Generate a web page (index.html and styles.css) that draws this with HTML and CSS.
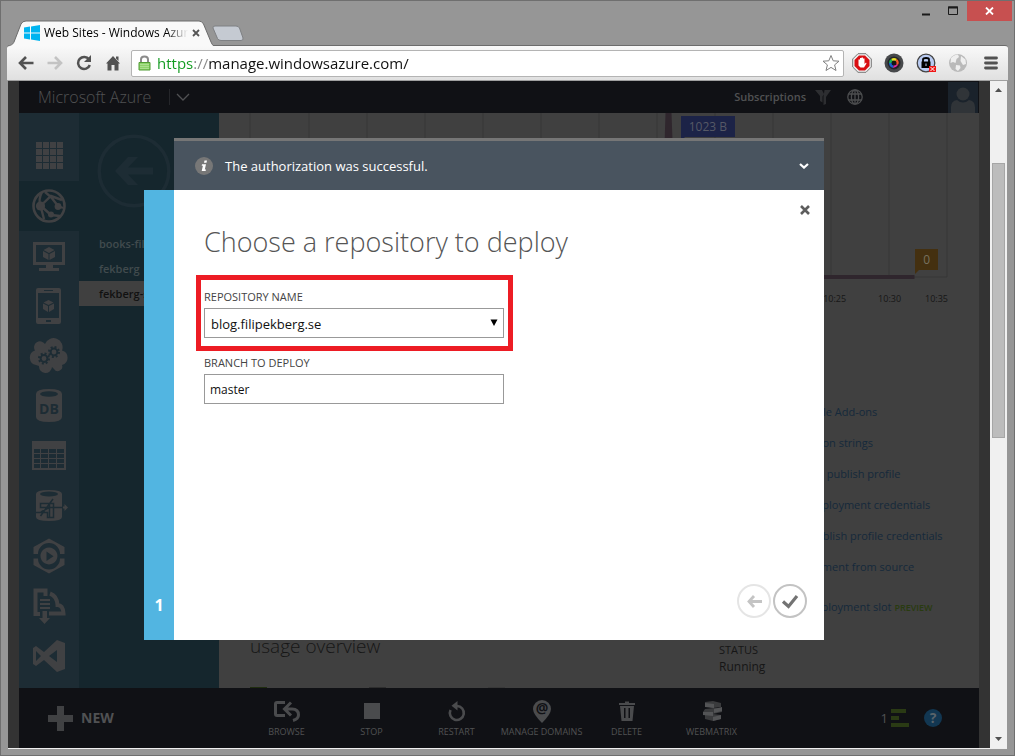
FILE: index.html
```html
<!DOCTYPE html>
<html lang="en">
<head>
<meta charset="utf-8">
<title>Web Sites - Windows Azure</title>
<link rel="stylesheet" href="styles.css">
</head>
<body>
<div class="window">
  <div class="titlebar">
    <div class="tab">
      <svg class="tab-shape" width="206" height="26" viewBox="0 0 206 26" aria-hidden="true"><path d="M0 26C4 25 5 24 6 22L13 4Q14.500 1 18 1H191Q194 1 195.500 4L203 22Q204 25 206 26" fill="#f9f9f9" stroke="#6c6c6c"/></svg>
      <svg width="16" height="16" viewBox="0 0 16 16" aria-hidden="true"><path fill="#00b4f0" d="M0 2.500L6 1.600V7.500H0zM7 1.400L16 0V7.500H7zM0 8.500H6V14.400L0 13.500zM7 8.500H16V16L7 14.600z"/></svg>
      <span class="tab-title">Web Sites - Windows Azur</span>
      <button class="plain" aria-label="Close tab"><svg width="8" height="8" viewBox="0 0 8 8"><path d="M1 1L7 7M7 1L1 7" stroke="#555" stroke-width="1.800"/></svg></button>
    </div>
    <button class="plain new-tab" aria-label="New tab"><svg width="32" height="17" viewBox="0 0 32 17"><path d="M3 1H24Q26.500 1 27.500 3L31 13Q31.500 15.500 29 15.500H9Q6.500 15.500 5.500 13.500L1 3Q.5 1 3 1z" fill="#c5cad2" stroke="#7e8083"/></svg></button>
    <div class="window-controls">
      <button class="plain" aria-label="Minimize"><svg width="10" height="10" viewBox="0 0 10 10"><path d="M1 8.500H9" stroke="#1b1b1b" stroke-width="2"/></svg></button>
      <button class="plain" aria-label="Maximize"><svg width="10" height="10" viewBox="0 0 10 10"><path d="M.5 1H9.500V8.500H.5z" fill="none" stroke="#1b1b1b"/><path d="M0 1.500H10" stroke="#1b1b1b" stroke-width="2"/></svg></button>
      <button class="plain close-window" aria-label="Close window"><svg width="9" height="8" viewBox="0 0 9 8"><path d="M1 .5L8 7.500M8 .5L1 7.500" stroke="#fff" stroke-width="1.800"/></svg></button>
    </div>
  </div>

  <div class="toolbar">
    <div class="nav-buttons">
      <button class="plain" aria-label="Back"><svg width="16" height="16" viewBox="0 0 16 16"><path d="M8 2L2 8L8 14M2.500 8H15.500" fill="none" stroke="#525252" stroke-width="2.600"/></svg></button>
      <button class="plain" aria-label="Forward" disabled><svg width="16" height="16" viewBox="0 0 16 16"><path d="M8 2L14 8L8 14M13.500 8H.5" fill="none" stroke="#c3c3c3" stroke-width="2.600"/></svg></button>
      <button class="plain" aria-label="Reload"><svg width="16" height="16" viewBox="0 0 16 16"><path d="M13 4.500A6 6 0 1 0 13.800 10" fill="none" stroke="#525252" stroke-width="2.500"/><path d="M15 0V7H8z" fill="#525252"/></svg></button>
      <button class="plain" aria-label="Home"><svg width="16" height="16" viewBox="0 0 16 16"><path d="M8 1L15 8.500H13.500V15.500H9.500V10H6.500V15.500H2.500V8.500H1zM11 1.500H13.500V6L11 3.500z" fill="#525252"/></svg></button>
    </div>
    <div class="omnibox">
      <svg width="13" height="16" viewBox="0 0 13 16" aria-hidden="true"><path d="M3 8V4.500Q3 1.500 6.500 1.500T10 4.500V8" fill="none" stroke="#8b8b8b" stroke-width="2"/><path d="M1 7.500H12V15H1z" fill="#8ed36a" stroke="#519c34"/><path d="M2 9.500H11M2 11.500H11M2 13.500H11" stroke="#acdf91"/></svg>
      <input class="url" type="text" aria-label="Address" value="https://manage.windowsazure.com/">
      <button class="plain" aria-label="Bookmark this page"><svg width="18" height="18" viewBox="0 0 18 18"><path d="M9 1.500L11.200 6.800L17 7.200L12.600 10.900L14 16.500L9 13.400L4 16.500L5.400 10.900L1 7.200L6.800 6.800z" fill="#fff" stroke="#808080"/></svg></button>
    </div>
    <div class="extensions">
      <button class="plain" aria-label="Ad blocker"><svg width="20" height="20" viewBox="0 0 20 20"><path d="M6 .7H14L19.300 6V14L14 19.300H6L.7 14V6z" fill="#eee" stroke="#777"/><path d="M7 2.500H13L17.500 7V13L13 17.500H7L2.500 13V7z" fill="#d90e12"/><path d="M6.500 10V6.500H8V9V5H9.500V9V4.500H11V9V5.500H12.500V11L14 9.500L14.500 10.500L12 14.500H8.500L6.500 12.500z" fill="#fff"/></svg></button>
      <button class="plain" aria-label="Camera"><svg width="20" height="20" viewBox="0 0 20 20"><circle cx="10" cy="10" r="9.500" fill="#47494b"/><circle cx="10" cy="10" r="6.500" fill="#24252a"/><circle cx="10" cy="10" r="5" fill="#111"/><path d="M10 10L7 6Q10 4 13 6z" fill="#e9e128"/><path d="M10 10L13 6Q16 9 14 12z" fill="#f05a28"/><path d="M10 10L14 12Q12 15 9 15z" fill="#dc2aa0"/><path d="M10 10L9 15Q5 14 5 10z" fill="#1a5fd0"/><path d="M10 10L5 10Q5 7 7 6z" fill="#18b35a"/><circle cx="10" cy="10" r="2.500" fill="#151515"/></svg></button>
      <button class="plain" aria-label="Password manager"><svg width="20" height="20" viewBox="0 0 20 20"><circle cx="10" cy="10" r="8.800" fill="#b9cbf2" stroke="#444" stroke-width="1.300"/><path d="M7 9V6.500Q7 5 10 5T13 6.500V9" fill="none" stroke="#000" stroke-width="1.800"/><path d="M5.500 8.500H14.500V15H5.500z" fill="#000"/><path d="M10 10.500V13" stroke="#b9cbf2"/><path d="M13 13H20V19H13z" fill="#f01515"/><path d="M14.500 14L18.500 18M18.500 14L14.500 18" stroke="#fff"/></svg></button>
      <button class="plain" aria-label="Globe"><svg width="20" height="20" viewBox="0 0 20 20"><circle cx="10" cy="10" r="9" fill="#bababa"/><path d="M3 5Q6 1.500 10 1.500L11 4L8.500 6L7.500 10L5 9L2.500 10zM13 3L17.500 6.500L18 11L15 12L12.500 8zM8 12L12 12.500L12.500 15L10 18L7.500 16z" fill="#efefef"/></svg></button>
      <button class="plain menu" aria-label="Menu"><svg width="14" height="14" viewBox="0 0 14 14"><path d="M1.500 2H12.500M1.500 7H12.500M1.500 12H12.500" stroke="#525252" stroke-width="2.800" stroke-linecap="round"/></svg></button>
    </div>
  </div>

  <div class="viewport">
    <div class="page">
      <header class="topbar">
        <span class="brand">Microsoft Azure</span>
        <button class="plain brand-menu" aria-label="Portals"><svg width="14" height="8" viewBox="0 0 14 8"><path d="M1 1L7 7L13 1" fill="none" stroke="#505153" stroke-width="1.300"/></svg></button>
        <a class="subscriptions" href="#">Subscriptions</a>
        <svg width="16" height="15" viewBox="0 0 16 15" aria-hidden="true"><path d="M0 0H7L9 4L7.500 6.500V12.500L5 11V6zM9.500 0H16L11 7V14L8.500 15V6.500z" fill="#2d2e31"/></svg>
        <button class="plain language" aria-label="Language"><svg width="16" height="16" viewBox="0 0 16 16"><g fill="none" stroke="#4c4d4f" stroke-width="1.300"><circle cx="8" cy="8" r="7.200"/><ellipse cx="8" cy="8" rx="3.600" ry="7.200"/><path d="M8 1V15M1.500 5H14.500M1.500 11H14.500"/></g></svg></button>
        <button class="plain avatar" aria-label="Account"><svg width="30" height="31" viewBox="0 0 30 31"><path fill="#1a222b" d="M0 0H30V31H0z"/><circle cx="15" cy="12" r="6.500" fill="#303438"/><path d="M3 31V25Q3 19 9 18Q15 23 21 18Q27 19 27 25V31z" fill="#303438"/></svg></button>
      </header>

      <div class="workspace">
        <nav class="services" aria-label="Services">
          <a href="#" aria-label="All items"><svg width="36" height="36" viewBox="0 0 36 36"><path d="M5 4h6v6H5zM12 4h6v6h-6zM19 4h6v6h-6zM26 4h6v6h-6zM5 11h6v6H5zM12 11h6v6h-6zM19 11h6v6h-6zM26 11h6v6h-6zM5 18h6v6H5zM12 18h6v6h-6zM19 18h6v6h-6zM26 18h6v6h-6zM5 25h6v6H5zM12 25h6v6h-6zM19 25h6v6h-6zM26 25h6v6h-6z"/></svg></a>
          <a class="current" href="#" aria-label="Web sites"><svg width="36" height="36" viewBox="0 0 36 36"><circle cx="18" cy="18" r="15.500" fill="none" stroke="#404143" stroke-width="2.600"/><path d="M11 4Q7 12 9.500 18L13 31M9.500 18L20 8L31 12M14 4L20 9L27 18L32 20M10 18L20 27L29 28" fill="none" stroke="#404143" stroke-width="2.400"/><circle cx="9.500" cy="18" r="4.600"/><circle cx="27" cy="18.500" r="3.400"/><circle cx="20" cy="26.500" r="3"/></svg></a>
          <a href="#" aria-label="Virtual machines"><svg width="36" height="36" viewBox="0 0 36 36"><path d="M2 4H34V27H22V30H28V33H8V30H15V27H2zM5 7V24H31V7z" fill-rule="evenodd"/><path d="M18 9L23.500 12L18 15L12.500 12zM12 13L17.500 16V22L12 19zM24 13L18.500 16V22L24 19z"/></svg></a>
          <a href="#" aria-label="Mobile services"><svg width="36" height="38" viewBox="0 0 36 38"><path d="M7 1H28Q30 1 30 3V35Q30 37 28 37H7Q5 37 5 35V3Q5 1 7 1zM7 6V31H28V6zM13 3V4H22V3zM15 33V35H20V33z" fill-rule="evenodd"/><path d="M17.500 13L22.500 15.500L17.500 18L12.500 15.500zM12 16.500L17 19V25L12 22zM23 16.500L18 19V25L23 22z"/></svg></a>
          <a href="#" aria-label="Cloud services"><svg width="40" height="36" viewBox="0 0 40 36"><path d="M7 27A7.500 7.500 0 0 1 6 12.500A5.500 5.500 0 0 1 16 6A8.500 8.500 0 0 1 33 12.500A7.500 7.500 0 0 1 33 27A4.500 4.500 0 0 1 25 31L23 29A6.500 6.500 0 0 1 10 28z"/><g fill="none" stroke="#1d2c34"><circle cx="15" cy="20.500" r="3.400" stroke-width="2"/><circle cx="15" cy="20.500" r="5" stroke-width="2" stroke-dasharray="1.960"/><circle cx="25" cy="14" r="3.400" stroke-width="2"/><circle cx="25" cy="14" r="5" stroke-width="2" stroke-dasharray="1.960"/></g></svg></a>
          <a href="#" aria-label="SQL databases"><svg width="36" height="36" viewBox="0 0 36 36"><path d="M5 6Q5 1 18 1T31 6V29Q31 34 18 34T5 29z"/><ellipse cx="18" cy="6" rx="9" ry="2.800" fill="#1d2c34"/><text x="18" y="26" text-anchor="middle" font-size="14" font-weight="700" fill="#1d2c34">DB</text></svg></a>
          <a href="#" aria-label="Storage"><svg width="36" height="36" viewBox="0 0 36 36"><path d="M1 3H35V32H1zM3 11v4h6v-4zM10 11v4h7v-4zM18 11v4h7v-4zM26 11v4h7v-4zM3 16v4h6v-4zM10 16v4h7v-4zM18 16v4h7v-4zM26 16v4h7v-4zM3 21v4h6v-4zM10 21v4h7v-4zM18 21v4h7v-4zM26 21v4h7v-4zM3 26v4h6v-4zM10 26v4h7v-4zM18 26v4h7v-4zM26 26v4h7v-4z" fill-rule="evenodd"/></svg></a>
          <a href="#" aria-label="HDInsight"><svg width="40" height="36" viewBox="0 0 40 36"><path d="M7 6Q7 2 20 2T33 6V29Q33 33 20 33T7 29z"/><ellipse cx="20" cy="6" rx="9" ry="2.600" fill="#1d2c34"/><path d="M7 24.500H18.500V29.500H24.500V15.500H11.500V19.500H34M11.500 28L24 11M20.500 15V29M12 24L20 19.500" fill="none" stroke="#1d2c34" stroke-width="1.500"/><path d="M34 18.500H35.500V16L39 19.500L35.500 23V20.500H34z"/></svg></a>
          <a href="#" aria-label="Media services"><svg width="36" height="38" viewBox="0 0 36 38"><path d="M18 1.500L33.500 10V17H29A11 11 0 0 0 7 17H2.500V10zM18 36.500L2.500 28V21.500H7A11 11 0 0 0 29 21.500H33.500V28z"/><path d="M18 10.500A8.500 8.500 0 1 1 17.900 10.500M15.500 14.500V24L22.500 19.200z" fill-rule="evenodd"/></svg></a>
          <a href="#" aria-label="Service bus"><svg width="36" height="38" viewBox="0 0 36 38"><path d="M9 27H4.500V3.500H14.500V9M19 6.500Q26 9 26.500 18Q32 18 32.500 26.500H18" fill="none" stroke="#404143" stroke-width="4"/><path d="M9 12H19V14H9zM9 16H19V18H9zM9 20H19V22H9zM11.500 24H16V31H19L13.500 37L8 31H11.500z"/></svg></a>
          <a href="#" aria-label="Visual Studio Online"><svg width="36" height="36" viewBox="0 0 36 36"><path d="M26 2L34 5V31L26 34L13 22L5 28L2 26V10L5 8L13 14zM26 12L18 18L26 24zM5 13V23L10 18z" fill-rule="evenodd"/></svg></a>
        </nav>

        <aside class="sites">
          <button class="plain back" aria-label="Back to all web sites"><svg width="74" height="74" viewBox="0 0 74 74"><circle cx="37" cy="37" r="34.800" fill="none" stroke="#1d2c34" stroke-width="3.500"/><path d="M31 23H41L31 33.500H56V40.500H31L41 51H31L18 37z" fill="#1d2c34"/></svg></button>
          <ul>
            <li><a href="#">books-filipekberg</a></li>
            <li><a href="#">fekberg</a></li>
            <li class="current"><a href="#">fekberg-site</a></li>
          </ul>
        </aside>

        <main class="dashboard">
          <section class="chart">
            <svg class="plot" viewBox="0 0 698 166" width="698" height="166" aria-hidden="true"><path d="M.5 0V164M59.500 0V164M117.500 0V164M175.500 0V164M233.500 0V164M291.500 0V164M349.500 0V164M407.500 0V164M465.500 0V164M523.500 0V164M581.500 0V164M639.500 0V164M697.500 0V164H0" fill="none" stroke="#363636"/><path d="M0 164H413L418 0H420L426 164H665" fill="none" stroke="#2f262d" stroke-width="4"/></svg>
            <span class="flag traffic">1023 B</span>
            <span class="flag errors">0</span>
            <div class="ticks"><span>10:25</span><span>10:30</span><span>10:35</span></div>
          </section>
          <div class="details">
            <section class="usage">
              <h2>usage overview</h2>
              <div class="legend"><i class="used"></i><i></i><i class="rest"></i></div>
            </section>
            <section class="glance">
              <ul>
                <li><a href="#">View Applicable Add-ons</a></li>
                <li><a href="#">View connection strings</a></li>
                <li><a href="#">Download the publish profile</a></li>
                <li><a href="#">Reset your deployment credentials</a></li>
                <li><a href="#">Reset your publish profile credentials</a></li>
                <li><a href="#">Set up deployment from source</a></li>
                <li class="slot"><a href="#">Add a new deployment slot</a> <b>PREVIEW</b></li>
              </ul>
              <dl><dt>STATUS</dt><dd>Running</dd></dl>
            </section>
          </div>
        </main>
      </div>

      <footer class="commands">
        <button class="plain new"><svg width="25" height="25" viewBox="0 0 25 25" aria-hidden="true"><path d="M9 0H16V9H25V16H16V25H9V16H0V9H9z" fill="#404143"/></svg>NEW</button>
        <div class="actions">
          <button class="plain"><svg width="28" height="22" viewBox="0 0 28 22"><path d="M12 1.500H4Q2.500 1.500 2.500 3V13Q2.500 14.500 4 14.500H12" fill="none" stroke="#4a4b4d" stroke-width="3"/><path d="M18 1.500L11.500 8L18 14.500M13 8H19Q25.500 8 25.500 14Q25.500 18 20 19.500" fill="none" stroke="#4a4b4d" stroke-width="3"/></svg>BROWSE</button>
          <button class="plain"><svg width="22" height="22" viewBox="0 0 22 22"><path d="M3 2H19V18H3z" fill="#4a4b4d"/></svg>STOP</button>
          <button class="plain"><svg width="22" height="22" viewBox="0 0 22 22"><path d="M4.500 9A7 7 0 1 0 11 5" fill="none" stroke="#4a4b4d" stroke-width="2.600"/><path d="M11.500 0V9.500L5.500 4.800z" fill="#4a4b4d"/></svg>RESTART</button>
          <button class="plain"><svg width="22" height="24" viewBox="0 0 22 24"><path d="M11 0A9 9 0 0 1 20 9Q20 14 11 23Q2 14 2 9A9 9 0 0 1 11 0z" fill="#4a4b4d"/><text x="11" y="13" text-anchor="middle" font-size="14" font-weight="700" fill="#101115">@</text></svg>MANAGE DOMAINS</button>
          <button class="plain"><svg width="22" height="22" viewBox="0 0 22 22"><path d="M3 2H9V.5H13V2H19V4H3zM4 5H18L16.500 20H5.500zM8 7V17H9.500V7zM12.500 7V17H14V7z" fill="#4a4b4d" fill-rule="evenodd"/></svg>DELETE</button>
          <button class="plain"><svg width="22" height="22" viewBox="0 0 22 22"><path d="M4 1L12 0L20 2V6L12 7L4 5zM4 8L13 7L21 7V11L12 13L2 11zM4 14L12 13L20 14V18L12 20L4 18z" fill="#3a3b3d"/><path d="M4 2L13 3V7L4 6zM13 8L21 6V10L13 12zM2 11L12 11V15L2 14zM12 16L20 14V18L12 20z" fill="#535456"/></svg>WEBMATRIX</button>
        </div>
        <div class="status-tray">
          <button class="plain notices">1<svg width="18" height="18" viewBox="0 0 18 18" aria-hidden="true"><path d="M0 0H15V4H0zM0 7H8V11H0zM0 14H18V18H0z" fill="#2a3a14"/></svg></button>
          <button class="plain help" aria-label="Help">?</button>
        </div>
      </footer>

      <div class="dialog" role="dialog" aria-labelledby="dialog-title">
        <div class="notification">
          <svg width="18" height="18" viewBox="0 0 18 18" aria-hidden="true"><circle cx="9" cy="9" r="9" fill="#777"/><path d="M9.500 3.500H12L11.500 5.700H9zM7 7.300H11L9.800 12.500H11L10.600 14H6.700L7.900 8.700H6.700z" fill="#fff"/></svg>
          <span>The authorization was successful.</span>
          <button class="plain" aria-label="Collapse"><svg width="10" height="6" viewBox="0 0 10 6"><path d="M1 1L5 4.600L9 1" fill="none" stroke="#fff" stroke-width="2.200"/></svg></button>
        </div>
        <div class="dialog-body">
          <div class="step">1</div>
          <button class="plain dismiss" aria-label="Close"><svg width="10" height="10" viewBox="0 0 10 10"><path d="M1 1L9 9M9 1L1 9" stroke="#5d5d5d" stroke-width="2.600"/></svg></button>
          <h1 id="dialog-title">Choose a repository to deploy</h1>
          <form>
            <div class="field highlighted">
              <label for="repository">REPOSITORY NAME</label>
              <select id="repository"><option>blog.filipekberg.se</option></select>
              <svg class="arrow" width="8" height="7" viewBox="0 0 8 7" aria-hidden="true"><path d="M.5 .5H7.500L4 7z" fill="#000"/></svg>
            </div>
            <div class="field">
              <label for="branch">BRANCH TO DEPLOY</label>
              <input id="branch" type="text" value="master">
            </div>
          </form>
          <div class="wizard-buttons">
            <button class="plain" aria-label="Previous" disabled><svg width="34" height="34" viewBox="0 0 34 34"><circle cx="17" cy="17" r="16" fill="none" stroke="#e5e5e5" stroke-width="2"/><path d="M17 12L12 17.500L17 23M12.500 17.500H25" fill="none" stroke="#c4c4c4" stroke-width="2.800"/></svg></button>
            <button class="plain" aria-label="Complete"><svg width="34" height="34" viewBox="0 0 34 34"><circle cx="17" cy="17" r="16" fill="none" stroke="#c3c3c3" stroke-width="2"/><path d="M10 17.500L15.500 22.500L24 12" fill="none" stroke="#737373" stroke-width="3.200"/></svg></button>
          </div>
        </div>
      </div>
    </div>

    <div class="scrollbar" aria-hidden="true">
      <svg width="17" height="17" viewBox="0 0 17 17"><path d="M5 11L8.500 7L12 11z" fill="#505050"/></svg>
      <div class="track"><span class="before"></span><span class="thumb"></span><span class="after"></span></div>
      <svg width="17" height="17" viewBox="0 0 17 17"><path d="M5 6L8.500 10L12 6z" fill="#505050"/></svg>
    </div>
  </div>
</div>
</body>
</html>
```

FILE: styles.css
```css
* { box-sizing: border-box; }
body {
  margin: 0;
  font-family: "Open Sans", "Noto Sans", sans-serif;
  font-size: 12px;
  line-height: 16px;
}
svg { display: block; flex: none; }
ul, dl, dd, h1, h2 { margin: 0; padding: 0; list-style: none; }
a { color: inherit; text-decoration: none; }
.plain {
  padding: 0;
  border: 0;
  background: none;
  color: inherit;
  font: inherit;
}

/* Browser frame */
.window {
  display: flex;
  flex-direction: column;
  height: 100vh;
  padding: 0 6px 6px;
  border: 1px solid #6f6f6f;
  background: #969696;
}
.titlebar { display: flex; height: 44px; padding-left: 1px; }
.tab {
  position: relative;
  display: flex;
  align-items: center;
  gap: 4px;
  width: 204px;
  height: 24px;
  margin-top: 20px;
  padding: 0 16px;
}
.tab-shape { position: absolute; left: 0; top: -1px; }
.tab > :not(.tab-shape) { position: relative; }
.tab-title {
  flex: 1;
  white-space: nowrap;
  mask-image: linear-gradient(to right, #000 85%, transparent);
}
.new-tab { align-self: flex-start; margin: 24px 0 0; }
.window-controls { display: flex; gap: 17px; height: 20px; margin: 0 -4px 0 auto; }
.close-window { display: grid; place-items: center; width: 45px; margin-left: -8px; background: #c75050; }

.toolbar {
  display: flex;
  align-items: center;
  gap: 8px;
  height: 36px;
  padding: 0 10px 0 11px;
  border-top: 1px solid #6c6c6c;
  border-bottom: 1px solid #a0a0a0;
  border-radius: 3px 3px 0 0;
  background: linear-gradient(#f9f9f9, #e0e0e0);
}
.nav-buttons { display: flex; gap: 13px; margin-right: 2px; }
.omnibox {
  flex: 1;
  display: flex;
  align-items: center;
  gap: 6px;
  height: 27px;
  padding: 0 3px 0 6px;
  border: 1px solid #b4b4b4;
  border-radius: 2px;
  background: #fff;
}
.url {
  flex: 1;
  min-width: 0;
  padding: 0;
  border: 0;
  background: linear-gradient(to right, #0f9a1e 36px, #858585 36px, #858585 51px, #111 51px);
  background-clip: text;
  color: transparent;
  font: 15px/20px "Open Sans", "Noto Sans", sans-serif;
}
.extensions { display: flex; align-items: center; gap: 12px; }
.menu { margin-left: 4px; }

.viewport {
  flex: 1;
  display: flex;
  min-height: 0;
  margin: 0 1px;
  border-bottom: 1px solid #eee;
}
.scrollbar { display: flex; flex-direction: column; width: 17px; background: #f0f0f0; }
.track { flex: 1; display: flex; flex-direction: column; padding: 0 2px; }
.before { flex: 65; }
.thumb { flex: 274; border: 1px solid #a6a6a6; background: #bcbcbc; }
.after { flex: 294; }

/* Portal */
.page {
  position: relative;
  flex: 1;
  display: flex;
  flex-direction: column;
  min-width: 0;
  padding: 0 11px;
  background: #333;
}
.topbar {
  display: flex;
  align-items: center;
  height: 32px;
  padding: 0 1px 0 19px;
  background: #101115;
  color: #505153;
}
.brand { font-size: 16px; font-weight: 300; }
.brand-menu { margin-left: 18px; padding: 4px 6px; border-left: 1px solid #25262a; }
.subscriptions { margin: 0 9px 0 auto; font-size: 11px; font-weight: 600; }
.language { margin: 0 85px 0 16px; }

.workspace { flex: 1; display: flex; min-height: 0; overflow: hidden; }
.services { width: 60px; padding-top: 18px; background: #1d2c34; fill: #404143; }
.services a { display: grid; place-items: center; height: 50px; }
.services .current { background: #15262d; }

.sites { width: 140px; overflow: hidden; background: #15262d; color: #414b4e; font-weight: 600; font-size: 11px; }
.back { display: block; margin: 21px 18px 23px; }
.sites li { padding-left: 20px; line-height: 25px; white-space: nowrap; }
.sites .current { background: #404040; color: #111; }

.dashboard { flex: 1; min-width: 0; overflow: hidden; background: #404040; color: #161616; }
.chart { position: relative; padding: 0 31px 0 30px; }
.plot { width: 100%; }
.flag {
  position: absolute;
  padding: 0 8px;
  background: #1c2347;
  color: #565966;
  line-height: 21px;
}
.flag::after {
  content: "";
  position: absolute;
  top: 100%;
  left: 0;
  border: solid transparent;
  border-width: 0 4px 4px 0;
  border-left: 0 solid;
  border-top: 4px solid #1c2347;
  border-bottom: 0;
}
.traffic { top: 3px; right: 244px; }
.errors { top: 136px; right: 41px; background: #443010; color: #77705f; }
.errors::after { border-top-color: #443010; }
.ticks { display: flex; justify-content: flex-end; gap: 32px; padding-top: 12px; font-size: 9px; }
.ticks :last-child { margin-left: -8px; }
.details { display: grid; grid-template-columns: 469px 1fr; padding: 89px 0 0 31px; }
.usage { padding-top: 237px; }
.usage h2 { font-size: 19px; font-weight: 300; line-height: 26px; }
.legend { display: flex; gap: 102px; margin-top: 28px; }
.legend i { width: 17px; height: 17px; background: #2e2e2e; }
.legend .used { background: #1f2d0f; }
.legend .rest { background: #383838; }
.glance li { padding-left: 33px; font-size: 11px; line-height: 31px; color: #15293b; white-space: nowrap; }
.glance .slot { margin-top: 9px; }
.slot b { color: #293b10; font-size: 9px; font-weight: 600; }
.glance dl { padding-top: 18px; line-height: 17px; }
.glance dt { font-size: 11px; }

.commands { position: relative; display: flex; height: 60px; background: #101115; color: #505153; }
.new { display: flex; align-items: center; gap: 8px; width: 225px; padding-left: 29px; font-size: 14px; font-weight: 700; }
.actions { display: grid; grid-template-columns: repeat(6, 85px); font-size: 9px; }
.actions button { display: flex; flex-direction: column; align-items: center; padding-top: 12px; white-space: nowrap; }
.actions svg { height: 24px; }
.status-tray { display: flex; align-items: center; gap: 15px; margin: 0 37px 0 auto; }
.notices { display: flex; align-items: center; gap: 3px; font-size: 13px; }
.help { width: 18px; height: 18px; border-radius: 50%; background: #123752; color: #59636a; font-size: 14px; font-weight: 700; line-height: 18px; }

/* Dialog over the dimmed portal */
.dialog { position: absolute; top: 57px; left: calc(50% - 325px); width: 650px; }
.notification {
  display: flex;
  align-items: center;
  gap: 12px;
  height: 52px;
  padding: 1px 15px 0 21px;
  border-top: 3px solid #767676;
  background: #49545f;
  color: #fff;
  font-size: 13px;
}
.notification button { margin-left: auto; }
.dialog-body { position: relative; min-height: 450px; padding: 34px 30px; background: #fff; color: #444; }
.step {
  position: absolute;
  top: 0;
  bottom: 0;
  right: 100%;
  display: flex;
  align-items: flex-end;
  justify-content: center;
  width: 30px;
  padding-bottom: 27px;
  background: #52b5e1;
  color: #fff;
  font-size: 16px;
  font-weight: 700;
}
.dismiss { position: absolute; top: 15px; right: 14px; }
.dialog h1 { margin-bottom: 29px; color: #555; font-size: 27px; font-weight: 300; line-height: 36px; }
.field { position: relative; width: 300px; margin-bottom: 17px; font-size: 11px; }
.field label { display: block; margin-bottom: 3px; }
.field select, .field input {
  display: block;
  width: 100%;
  height: 30px;
  padding: 0 5px;
  border: 1px solid #999;
  border-radius: 0;
  background: #fff;
  color: #111;
  font: 12px/16px "Open Sans", "Noto Sans", sans-serif;
  appearance: none;
}
.field select { padding: 2px 6px 0; font-size: 13px; }
.arrow { position: absolute; right: 6px; bottom: 12px; }
.highlighted::after {
  content: "";
  position: absolute;
  inset: -14px -9px -13px -8px;
  border: 5px solid #ed1c24;
  pointer-events: none;
}
.wizard-buttons { position: absolute; right: 17px; bottom: 22px; display: flex; gap: 2px; }
```
